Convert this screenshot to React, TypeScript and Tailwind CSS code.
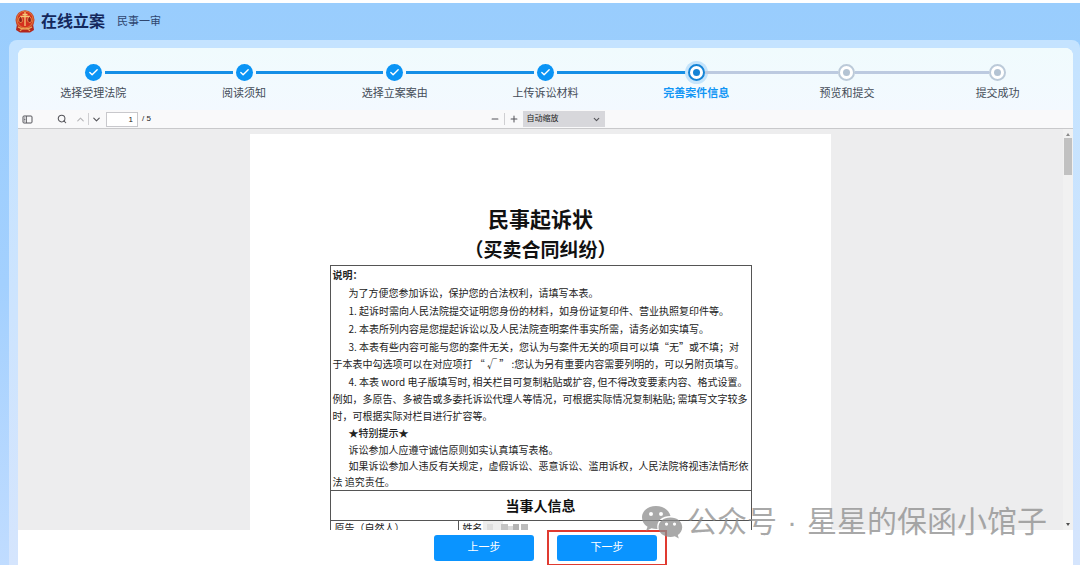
import { Check, ChevronDown, ChevronUp, Minus, PanelLeft, Plus, Search } from "lucide-react";

type StepState = "done" | "current" | "todo";

const STEPS: { label: string; state: StepState }[] = [
  { label: "选择受理法院", state: "done" },
  { label: "阅读须知", state: "done" },
  { label: "选择立案案由", state: "done" },
  { label: "上传诉讼材料", state: "done" },
  { label: "完善案件信息", state: "current" },
  { label: "预览和提交", state: "todo" },
  { label: "提交成功", state: "todo" },
];

// every inner array is one paragraph, broken where the printed form breaks
const NOTES: string[][] = [
  ["为了方便您参加诉讼，保护您的合法权利，请填写本表。"],
  ["1. 起诉时需向人民法院提交证明您身份的材料，如身份证复印件、营业执照复印件等。"],
  ["2. 本表所列内容是您提起诉讼以及人民法院查明案件事实所需，请务必如实填写。"],
  [
    "3. 本表有些内容可能与您的案件无关，您认为与案件无关的项目可以填“无”或不填；对",
    "于本表中勾选项可以在对应项打 “ √ ” :您认为另有重要内容需要列明的，可以另附页填写。",
  ],
  [
    "4. 本表 word 电子版填写时, 相关栏目可复制粘贴或扩容, 但不得改变要素内容、格式设置。",
    "例如，多原告、多被告或多委托诉讼代理人等情况，可根据实际情况复制粘贴; 需填写文字较多",
    "时，可根据实际对栏目进行扩容等。",
  ],
];

export default function App() {
  return (
    <div className="flex h-screen flex-col overflow-hidden border-t-[3px] border-white bg-linear-to-b from-[#99cdfd] via-[#a3d0fe] to-[#c0dcff] font-['Liberation_Sans','Noto_Sans_CJK_SC',sans-serif] text-[#444c58]">
      <Header />
      <div className="ml-[9px] flex min-h-0 flex-1 flex-col rounded-t-lg bg-linear-to-b from-[#c4e3ff] to-[#d5e5fd] pt-2 pr-[7px] pl-[9px]">
        <main className="flex min-h-0 flex-1 flex-col overflow-hidden rounded-t-lg bg-white">
          <Stepper />
          <ViewerToolbar />
          <Viewer />
          <Footer />
        </main>
      </div>
      <Watermark />
    </div>
  );
}

function Header() {
  return (
    <header className="flex h-[37px] shrink-0 items-center pl-[15px]">
      <CourtEmblem />
      <h1 className="ml-[6px] text-[16px] font-bold text-[#14285c]">在线立案</h1>
      <span className="ml-3 text-[11px] text-[#2f466f]">民事一审</span>
    </header>
  );
}

function Stepper() {
  return (
    <ol className="grid h-[62px] shrink-0 grid-cols-7 bg-linear-to-b from-[#f0fbfd] to-[#f3f9ff] pt-[14px]">
      {STEPS.map((step, i) => (
        <li key={step.label} aria-current={step.state === "current" ? "step" : undefined}>
          <div className="flex h-5 items-center">
            <Line state={i === 0 ? null : step.state === "todo" ? "todo" : "done"} />
            <StepDot state={step.state} />
            <Line state={i === STEPS.length - 1 ? null : step.state === "done" ? "done" : "todo"} />
          </div>
          <p className={`text-center text-[11px] leading-[22px] ${step.state === "current" ? "font-bold text-[#1296f5]" : ""}`}>
            {step.label}
          </p>
        </li>
      ))}
    </ol>
  );
}

function Line({ state }: { state: "done" | "todo" | null }) {
  const color = state === "done" ? "bg-[#158fe6]" : state === "todo" ? "bg-[#bccae0]" : "";
  return <span className={`h-[3px] flex-1 ${color}`} />;
}

function StepDot({ state }: { state: StepState }) {
  if (state === "done") {
    return (
      <span className="mx-[3px] flex size-[17px] items-center justify-center rounded-full bg-[#0a94f5] text-white">
        <Check size={11} strokeWidth={3} aria-hidden />
      </span>
    );
  }
  if (state === "current") {
    return (
      <span className="flex size-[17px] items-center justify-center rounded-full border-2 border-[#1584d6] bg-white ring-3 ring-[#c5e4fb]">
        <span className="size-[7px] rounded-full bg-[#1584d6]" />
      </span>
    );
  }
  return (
    <span className="flex size-[17px] items-center justify-center rounded-full border-2 border-[#bccad9] bg-white">
      <span className="size-[7px] rounded-full bg-[#b4c3d3]" />
    </span>
  );
}

function ViewerToolbar() {
  return (
    <div className="grid h-[19px] shrink-0 grid-cols-[1fr_auto_1fr] items-center border-b border-[#c9c9cb] bg-[#f9f9fa] text-[#55555a]">
      <div className="flex items-center pl-1">
        <button aria-label="切换侧栏"><SidebarIcon /></button>
        <button aria-label="查找" className="ml-6"><Search size={10} strokeWidth={2.5} /></button>
        <button aria-label="上一页" className="ml-2 text-[#b5b5b8]"><ChevronUp size={11} strokeWidth={2.5} /></button>
        <span className="mx-[2px] h-3 w-px bg-[#cfcfd2]" />
        <button aria-label="下一页"><ChevronDown size={11} strokeWidth={2.5} /></button>
        <input
          aria-label="页码"
          defaultValue="1"
          className="ml-1 h-[15px] w-8 border border-[#c8c8cc] bg-white pr-1 text-right text-[8px] text-[#222]"
        />
        <span className="ml-1 text-[8px] text-[#222]">/ 5</span>
      </div>
      <div className="flex items-center pl-[3px]">
        <button aria-label="缩小"><Minus size={10} strokeWidth={2.5} /></button>
        <span className="mx-1 h-3 w-px bg-[#cfcfd2]" />
        <button aria-label="放大"><Plus size={10} strokeWidth={2.5} /></button>
        <div className="relative ml-1">
          <select aria-label="缩放" className="block h-4 w-[82px] appearance-none bg-[#d7d7db] pl-1 text-[8px] text-[#222]">
            <option>自动缩放</option>
          </select>
          <ChevronDown size={9} strokeWidth={3} className="pointer-events-none absolute top-1 right-1" />
        </div>
      </div>
      <span />
    </div>
  );
}

function SidebarIcon() {
  return (
    <svg width="11" height="11" viewBox="0 0 11 11" fill="none" stroke="currentColor" aria-hidden>
      <rect x="1" y="2" width="9" height="7" rx="1" />
      <path d="M4.500 2v7M2 4h1.500M2 5.500h1.500M2 7h1.500" strokeWidth=".8" />
    </svg>
  );
}

function Viewer() {
  return (
    <div className="flex min-h-0 flex-1 overflow-hidden bg-[#ededee]">
      <div className="flex min-w-0 flex-1 justify-center overflow-hidden pt-[5px]">
        <Page />
      </div>
      <div className="flex w-[10px] shrink-0 flex-col items-center bg-[#f1f1f1] pt-1">
        <span className="border-x-2 border-b-3 border-x-transparent border-b-[#8a8a8a]" />
        <span className="mt-[2px] h-[37px] w-2 bg-[#c1c1c1]" />
        <span className="mt-auto mb-1 border-x-2 border-t-3 border-x-transparent border-t-[#505050]" />
      </div>
    </div>
  );
}

function Page() {
  return (
    <article className="h-[820px] w-[581px] shrink-0 bg-white pt-[69px] font-['Noto_Sans_CJK_SC',sans-serif] text-[#222]">
      <h2 className="text-center text-[21px] leading-[30px] font-bold text-[#111]">民事起诉状</h2>
      <h3 className="text-center text-[19px] leading-8 font-bold text-[#111]">（买卖合同纠纷）</h3>
      <table className="mx-auto w-[422px] table-fixed border-collapse text-[10px] leading-[17px]">
        <colgroup>
          <col className="w-[128px]" />
          <col />
        </colgroup>
        <tbody>
          <tr>
            <td colSpan={2} className="border border-[#555] pl-[2px] whitespace-nowrap">
              <div className="flex flex-col gap-px">
                <p className="font-bold">说明：</p>
                {NOTES.map((lines) => (
                  <p key={lines[0]} className="indent-4">
                    {lines.map((line) => (
                      <span key={line}>{line}<br /></span>
                    ))}
                  </p>
                ))}
              </div>
              <p className="indent-4 font-medium">★特别提示★</p>
              <p className="indent-4">诉讼参加人应遵守诚信原则如实认真填写表格。</p>
              <p className="indent-4 leading-4">
                如果诉讼参加人违反有关规定，虚假诉讼、恶意诉讼、滥用诉权，人民法院将视违法情形依<br />
                法 追究责任。
              </p>
            </td>
          </tr>
          <tr>
            <th colSpan={2} className="h-[30px] border border-[#555] text-[14px] font-bold text-[#111]">当事人信息</th>
          </tr>
          <tr className="leading-[14px]">
            <td className="border border-[#555] pl-1">原告（自然人）</td>
            <td className="border border-[#555] pl-1">
              <div className="flex items-center">
                姓名
                <Redaction />
              </div>
            </td>
          </tr>
        </tbody>
      </table>
    </article>
  );
}

/* pixelated cover over the party's name */
function Redaction() {
  return (
    <svg width="52" height="14" viewBox="0 0 52 14" aria-hidden>
      <rect x="0" y="0" width="20" height="14" fill="#eeeeee" />
      <rect x="4" y="3" width="6" height="6" fill="#dedede" />
      <rect x="18" y="3" width="7" height="11" fill="#c4c4c4" />
      <rect x="25" y="5" width="5" height="9" fill="#dadada" />
      <rect x="30" y="3" width="6" height="11" fill="#b4b4b4" />
      <rect x="38" y="3" width="7" height="11" fill="#bcbcbc" />
    </svg>
  );
}

function Footer() {
  return (
    <footer className="flex h-[35px] shrink-0 items-center justify-center gap-[13px] pl-[10px]">
      <button className="h-[26px] w-[100px] rounded-[3px] bg-[#0a94ff] text-[11px] text-white">上一步</button>
      <div className="border-2 border-[#e03a30] px-2 py-[3px]">
        <button className="block h-[26px] w-[100px] rounded-[3px] bg-[#0a94ff] text-[11px] text-white">下一步</button>
      </div>
    </footer>
  );
}

function Watermark() {
  return (
    <div className="pointer-events-none absolute right-[33px] bottom-[25px] flex items-center gap-1 text-[#8c8c8c]/75">
      <svg width="42" height="34" viewBox="0 0 42 34" fill="currentColor" aria-hidden>
        <path fillRule="evenodd" d="M15 1C7 1 1 6 1 12.500c0 4 2 7 5.500 9.200L5 26l5.500-2.700c2 .6 4 .8 6 .7C15 17 20 11 29.500 11 28 5 22 1 15 1ZM10 7a2 2 0 1 1 0 4 2 2 0 0 1 0-4Zm10 0a2 2 0 1 1 0 4 2 2 0 0 1 0-4Z" />
        <path fillRule="evenodd" d="M29.500 12.500c-7 0-12 4.200-12 9.700s5 9.700 12 9.700c1.500 0 3-.2 4.300-.6l4 2.200-1-3.600c2.800-1.900 4.400-4.600 4.400-7.700 0-5.500-5-9.700-11.700-9.700ZM25.500 17.500a1.600 1.600 0 1 1 0 3.200 1.600 1.600 0 0 1 0-3.200Zm8 0a1.600 1.600 0 1 1 0 3.200 1.600 1.600 0 0 1 0-3.200Z" />
      </svg>
      <div className="flex gap-[10px] text-[30px] leading-9 whitespace-nowrap">
        <span>公众号</span>
        <span>·</span>
        <span>星星的保函小馆子</span>
      </div>
    </div>
  );
}

function CourtEmblem() {
  return (
    <svg width="20" height="23" viewBox="0 0 20 23" aria-hidden>
      <path d="M2 14h16l1 6-4 2.500H5L1 20z" fill="#b3261c" />
      <ellipse cx="10" cy="10" rx="9.500" ry="9.800" fill="#c8452a" />
      <ellipse cx="10" cy="9.500" rx="8" ry="8.300" fill="#d4301f" stroke="#e28a40" strokeWidth=".8" />
      <path d="M10 2v14M7.500 4.500h5M5 6.500h10" stroke="#f6c878" strokeWidth="1.300" />
      <path d="M5.500 6.500C3 8 3 12 5.500 12.500S8 8 5.500 6.500ZM14.500 6.500C12 8 12 12 14.500 12.500S17 8 14.500 6.500Z" fill="#8f1d18" stroke="#efb060" strokeWidth=".8" />
      <path d="M3 17c3.500 2.500 10.500 2.500 14 0M5 21c1.500-3 8.500-3 10 0" fill="none" stroke="#eda65a" strokeWidth="1.200" />
    </svg>
  );
}
